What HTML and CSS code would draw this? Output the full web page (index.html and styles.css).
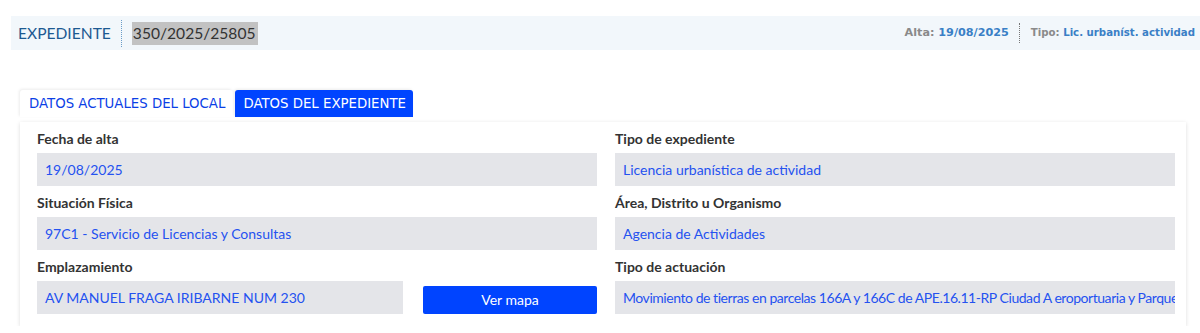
FILE: index.html
```html
<!DOCTYPE html>
<html lang="es">
<head>
    <meta charset="UTF-8">
    <meta name="viewport" content="width=device-width, initial-scale=1.0">
    <title>Expediente 350/2025/25805</title>
    <link rel="stylesheet" href="styles.css">
</head>
<body>
    <!-- Cabecera del expediente -->
    <div class="cabecera">
        <div class="cab-izq">
            <span class="cab-titulo">EXPEDIENTE</span>
            <span class="cab-numero">350/2025/25805</span>
        </div>
        <div class="cab-der">
            <span class="cab-dato alta">Alta: <b>19/08/2025</b></span>
            <span class="cab-dato">Tipo: <b>Lic. urbaníst. actividad</b></span>
        </div>
    </div>

    <!-- Pestañas -->
    <div class="pestanas">
        <a class="pestana" href="#">DATOS ACTUALES DEL LOCAL</a>
        <a class="pestana activa" href="#">DATOS DEL EXPEDIENTE</a>
    </div>

    <div class="panel">
        <div class="campo">
            <label>Fecha de alta</label>
            <div class="valor">19/08/2025</div>
        </div>
        <div class="campo">
            <label>Tipo de expediente</label>
            <div class="valor">Licencia urbanística de actividad</div>
        </div>
        <div class="campo">
            <label>Situación Física</label>
            <div class="valor">97C1 - Servicio de Licencias y Consultas</div>
        </div>
        <div class="campo">
            <label>Área, Distrito u Organismo</label>
            <div class="valor">Agencia de Actividades</div>
        </div>
        <div class="campo">
            <label>Emplazamiento</label>
            <div class="fila-mapa">
                <div class="valor">AV MANUEL FRAGA IRIBARNE NUM 230</div>
                <button type="button">Ver mapa</button>
            </div>
        </div>
        <div class="campo">
            <label>Tipo de actuación</label>
            <div class="valor largo">Movimiento de tierras en parcelas 166A y 166C de APE.16.11-RP Ciudad A eroportuaria y Parque</div>
        </div>
    </div>
</body>
</html>
```

FILE: styles.css
```css
body {
    margin: 16px 0 0 11px;
    font-family: "Lato", "Liberation Sans", sans-serif;
    background: #fff;
    overflow: hidden;
}

/* Cabecera */
.cabecera {
    display: flex;
    justify-content: space-between;
    align-items: center;
    height: 34px;
    padding: 0 5px 0 7px;
    background-color: #f2f7fb;
}

.cab-izq {
    display: flex;
    align-items: center;
}

.cab-titulo {
    color: #1d5a92;
    font-size: 15.6px;
    padding-right: 10px;
    border-right: 1px dotted #6a9cc8;
    line-height: 27px;
}

.cab-numero {
    margin-left: 10px;
    padding: 0 2px 0 1px;
    background-color: #c2c2c2;
    color: #333;
    font-size: 15.6px;
    line-height: 23px;
}

.cab-der {
    display: flex;
    align-items: center;
}

.cab-dato {
    font-family: "DejaVu Sans", sans-serif;
    font-size: 10.2px;
    font-weight: bold;
    color: #8a8a8a;
    line-height: 20px;
}

.cab-dato.alta {
    font-size: 11.2px;
}

.cab-dato b {
    color: #3a7fc6;
}

.cab-dato + .cab-dato {
    margin-left: 10px;
    padding-left: 11px;
    border-left: 1px dotted #777;
}

/* Pestañas */
.pestanas {
    display: flex;
    gap: 2px;
    margin: 40px 0 0 9px;
}

.pestana {
    display: block;
    padding: 0 8px 0 9px;
    line-height: 27px;
    font-family: "DejaVu Sans", sans-serif;
    font-size: 13.3px;
    color: #0b3fe6;
    text-decoration: none;
    background: #fff;
    border-radius: 3px 3px 0 0;
    box-shadow: -1px -1px 3px rgba(0, 0, 0, 0.08);
}

.pestana.activa {
    padding: 0 7px 0 8px;
    background-color: #0044ff;
    color: #fff;
}

/* Panel */
.panel {
    display: grid;
    grid-template-columns: 560px 560px;
    column-gap: 18px;
    width: 1166px;
    margin: 5px 0 0 9px;
    padding: 8px 11px 12px 17px;
    background: #fff;
    box-shadow: 0 1px 4px rgba(0, 0, 0, 0.14);
    box-sizing: border-box;
}

.campo label {
    display: block;
    font-weight: bold;
    font-size: 14px;
    color: #333;
    line-height: 18px;
    margin-bottom: 5px;
}

.campo {
    margin-bottom: 8px;
    min-width: 0;
}

.campo:nth-last-child(-n+2) {
    margin-bottom: 0;
}

.valor {
    height: 33px;
    line-height: 33px;
    padding: 0 8px;
    background-color: #e4e5e9;
    color: #2452f0;
    font-size: 14px;
    white-space: nowrap;
    overflow: hidden;
}

.valor.largo {
    letter-spacing: -0.45px;
}

.fila-mapa {
    display: flex;
    align-items: center;
    gap: 20px;
}

.fila-mapa .valor {
    width: 366px;
    box-sizing: border-box;
}

button {
    flex: 1;
    height: 28px;
    margin-top: 4px;
    background-color: #0044ff;
    color: #fff;
    border: none;
    border-radius: 2px;
    font-family: "Lato", sans-serif;
    font-size: 14px;
    cursor: pointer;
}
```
